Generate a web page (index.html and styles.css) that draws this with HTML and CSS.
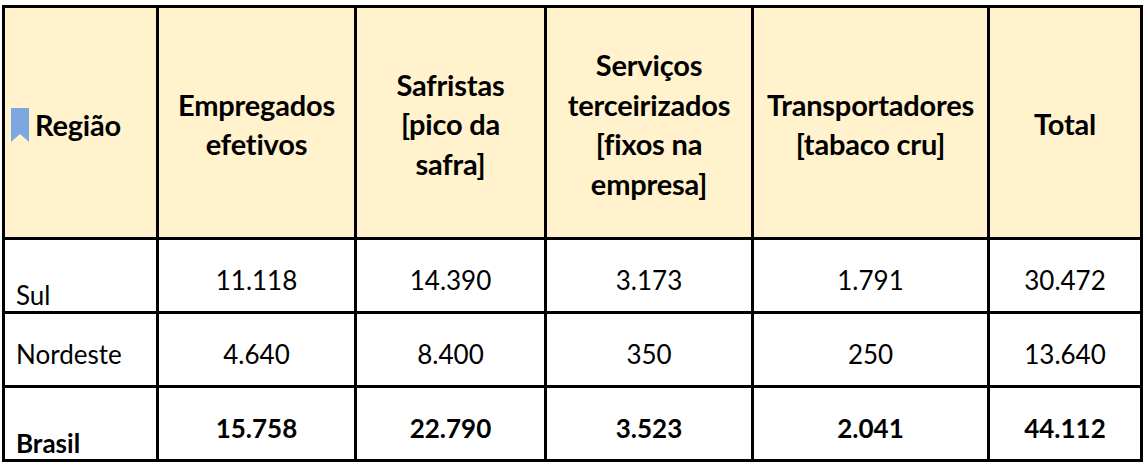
FILE: index.html
```html
<!DOCTYPE html>
<html lang="pt">
<head>
<meta charset="utf-8">
<title>Tabela</title>
<link rel="stylesheet" href="styles.css">
</head>
<body>
<table class="data">
  <colgroup>
    <col class="c1"><col class="c2"><col class="c3"><col class="c4"><col class="c5"><col class="c6">
  </colgroup>
  <thead>
    <tr class="head">
      <th class="first"><span class="region"><svg class="bookmark" width="18" height="34" viewBox="0 0 18 34"><path d="M0 0H18V34L9 26L0 34Z" fill="#7ea7e2"/></svg>Região</span></th>
      <th>Empregados<br>efetivos</th>
      <th>Safristas<br>[pico da<br>safra]</th>
      <th>Serviços<br>terceirizados<br>[fixos na<br>empresa]</th>
      <th>Transportadores<br>[tabaco cru]</th>
      <th>Total</th>
    </tr>
  </thead>
  <tbody>
    <tr class="row">
      <td class="first bottom">Sul</td>
      <td>11.118</td><td>14.390</td><td>3.173</td><td>1.791</td><td>30.472</td>
    </tr>
    <tr class="row">
      <td class="first">Nordeste</td>
      <td>4.640</td><td>8.400</td><td>350</td><td>250</td><td>13.640</td>
    </tr>
    <tr class="row total">
      <td class="first bottom">Brasil</td>
      <td>15.758</td><td>22.790</td><td>3.523</td><td>2.041</td><td>44.112</td>
    </tr>
  </tbody>
</table>
</body>
</html>
```
FILE: styles.css
```css
html, body {
  margin: 0;
  padding: 0;
  background: #ffffff;
}
body {
  padding: 5px 4px 0 2px;
  font-family: Lato, "Liberation Sans", sans-serif;
  color: #000;
}
.data {
  border-collapse: collapse;
  table-layout: fixed;
  width: 1140px;
}
.c1 { width: 154px; }
.c2 { width: 198px; }
.c3 { width: 190px; }
.c4 { width: 207px; }
.c5 { width: 236px; }
.c6 { width: 153px; }
.data th, .data td {
  border: 3px solid #000;
  padding: 0 2px;
  text-align: center;
  vertical-align: middle;
}
.head th {
  background: #fff2cc;
  height: 226px;
  padding-top: 3px;
  font-size: 29px;
  font-weight: 700;
  line-height: 39.5px;
  letter-spacing: -0.2px;
}
.head th.first {
  text-align: left;
  padding-left: 6px;
}
.region {
  display: inline-flex;
  align-items: center;
  gap: 6px;
  margin-top: 8px;
}
.bookmark {
  display: block;
}
.row td {
  height: 62px;
  padding-top: 9px;
  font-size: 26px;
  font-weight: 400;
}
.row td.first {
  text-align: left;
  padding-left: 11px;
}
.row td.bottom {
  vertical-align: bottom;
  padding-bottom: 0;
}
.total td {
  font-weight: 700;
}
```
